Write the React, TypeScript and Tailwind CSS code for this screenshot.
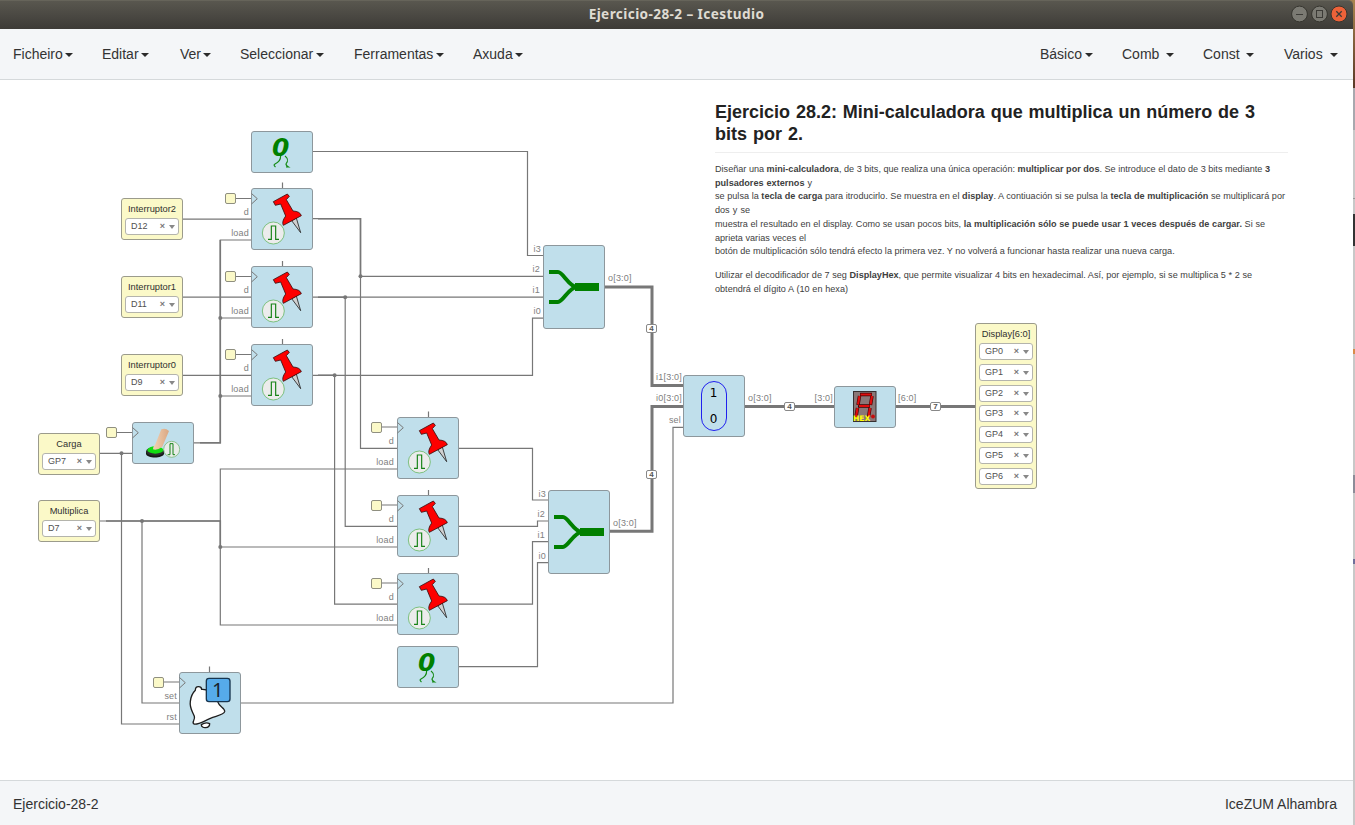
import type { ReactNode } from "react";

type MenuItem = { label: string; box: string };

const leftMenus: MenuItem[] = [
  { label: "Ficheiro", box: "w-[60px] mr-[29px]" },
  { label: "Editar", box: "w-[47px] mr-[31px]" },
  { label: "Ver", box: "w-[31px] mr-[29px]" },
  { label: "Seleccionar", box: "w-[84px] mr-[30px]" },
  { label: "Ferramentas", box: "w-[90px] mr-[29px]" },
  { label: "Axuda", box: "w-[50px]" },
];

const rightMenus: MenuItem[] = [
  { label: "Básico", box: "w-[53px] mr-[29px]" },
  { label: "Comb", box: "w-[52px] mr-[29px]" },
  { label: "Const", box: "w-[51px] mr-[30px]" },
  { label: "Varios", box: "w-[54px]" },
];

function Menu({ items }: { items: MenuItem[] }) {
  return (
    <ul className="flex items-center">
      {items.map((m) => (
        <li key={m.label} className={`flex items-center justify-between whitespace-nowrap ${m.box}`}>
          <span>{m.label}</span>
          <span className="mt-px h-0 w-0 border-x-4 border-t-4 border-x-transparent border-t-[#2b2b2b]" />
        </li>
      ))}
    </ul>
  );
}

function TitleBar() {
  return (
    <header className="relative flex h-[29px] shrink-0 items-center justify-center rounded-tr-[5px] border-t border-[#66645a] bg-gradient-to-b from-[#59574f] to-[#3d3b37]">
      <h1 className="pb-px font-['Noto_Sans'] text-[13.6px] font-bold tracking-[0.4px] text-[#dfdbd2]">
        Ejercicio-28-2 – Icestudio
      </h1>
      <svg className="absolute right-[3px] top-[4px]" width="60" height="18" viewBox="0 0 60 18">
        <g stroke="#36352f" strokeWidth="1">
          <circle cx="9.5" cy="9" r="7.9" fill="#7b7a73" />
          <circle cx="29.5" cy="9" r="7.9" fill="#7b7a73" />
          <circle cx="49" cy="9" r="8" fill="#ed6239" />
        </g>
        <g fill="none" stroke="#3c3b37">
          <path d="M6 9.5h7" />
          <rect x="26.5" y="5.5" width="6" height="7" />
          <path d="M46.3 6.3l5.4 5.4M51.7 6.3l-5.4 5.4" strokeWidth="1.3" />
        </g>
      </svg>
    </header>
  );
}

function Wires() {
  return (
    <svg className="absolute left-0 top-0" width="1353" height="700" viewBox="0 80 1353 700" fill="none">
      <g stroke="#777" strokeWidth="1.2">
        <path d="M313 151.5H527.5V255.5H543" />
        <path d="M183 219.2H251M183 297.2H251M183 375.3H251" />
        <path d="M313 218.7H360.5V448.3H397M360.5 276.3H543" />
        <path d="M313 297.2H543M345.2 297.2V526.3H397" />
        <path d="M313 375.3H532.5V318.2H543M334.6 375.3V604.2H397" />
        <path d="M194 442.8H220.3V240H251M220.3 318H251M220.3 396H251" />
        <path d="M100 453.3H132M121.5 453.3V724H179" />
        <path d="M100 521H220.3M142 521V703H179" />
        <path d="M397 469H220.3V625H397M220.3 547H397" />
        <path d="M459 448.3H532.5V500H548" />
        <path d="M459 526.3H537.5V521H548" />
        <path d="M459 604.2H532.5V541.7H548" />
        <path d="M459 666.6H537.5V562.6H548" />
        <path d="M241 703H673V427.4H683" />
        <path d="M236 198.5H251M236 276.5H251M236 354.5H251M382 427H397M382 505H397M382 583H397M116 432.5H132M163 682H179" />
        <path d="M282.5 182.5V188M282.5 261V266M282.5 339V344M428.5 411.5V417M428.5 490V495M428.5 568V573M209.5 666.5V672" />
      </g>
      <g stroke="#777" strokeWidth="1.6">
        <path d="M318 218.7H360.5V276M318 297.2H345M318 375.3H334" />
        <path d="M200 442.8H220.3V240M106 521H220.3V547" />
      </g>
      <g stroke="#777" strokeWidth="3">
        <path d="M605 286.9H652V385.6H683" />
        <path d="M610 531.3H652V406.4H683" />
        <path d="M745 406.4H834M896 406.4H975" />
      </g>
      <g fill="#777">
        <circle cx="360.5" cy="276.3" r="2" />
        <circle cx="345.2" cy="297.2" r="2" />
        <circle cx="334.6" cy="375.3" r="2" />
        <circle cx="220.3" cy="318" r="2" />
        <circle cx="220.3" cy="396" r="2" />
        <circle cx="121.5" cy="453.3" r="2" />
        <circle cx="142" cy="521" r="2" />
        <circle cx="220.3" cy="547" r="2" />
      </g>
    </svg>
  );
}

function Block({ box, children, clock }: { box: string; children?: ReactNode; clock?: boolean }) {
  return (
    <div className={`absolute rounded-[3px] border border-[#8d979c] bg-[#c0dfeb] ${box}`}>
      {clock && (
        <>
          <span className="absolute -left-[27.5px] top-[4px] h-[11px] w-[11px] rounded-[2px] border border-[#8f8f80] bg-[#fbf9c8]" />
          <svg className="absolute -left-px top-[4px]" width="8" height="12" viewBox="0 0 8 12" fill="none" stroke="#777">
            <path d="M0.5 0.5L6.3 5.7L0.5 11" />
          </svg>
        </>
      )}
      {children}
    </div>
  );
}

function Port({ at, children }: { at: string; children: string }) {
  return (
    <span className={`absolute whitespace-nowrap text-[9px] leading-[10px] tracking-[0.2px] text-[#808080] ${at}`}>
      {children}
    </span>
  );
}

function Register({ box, ports = "right-[63px]" }: { box: string; ports?: string }) {
  return (
    <Block box={`h-[62px] w-[62px] ${box}`} clock>
      <Port at={`${ports} top-[18px]`}>d</Port>
      <Port at={`${ports} top-[39px]`}>load</Port>
      <svg className="absolute -left-px -top-px" width="62" height="62" viewBox="0 0 186 186">
        <circle cx="67" cy="135" r="33" fill="#ececec" stroke="#69b869" strokeWidth="2.5" />
        <path d="M51 154H61V114H74V154H84" fill="none" stroke="#158215" strokeWidth="3.5" />
        <path d="M122 98L149 134L136 90Z" fill="#d0d0d0" stroke="#222" strokeWidth="2.5" />
        <path
          d="M67 41L109 18L115 25L106 35L126 69Q147 70 151 83L97 112Q91 102 104 84L89 48L73 52Z"
          fill="#fd0000"
          stroke="#3a0c0c"
          strokeWidth="2.5"
          strokeLinejoin="round"
        />
      </svg>
    </Block>
  );
}

function ZeroConstant({ box }: { box: string }) {
  return (
    <Block box={`h-[42px] w-[62px] ${box}`}>
      <span className="absolute left-[20px] top-[2px] font-['DejaVu_Sans'] text-[25px] font-bold italic leading-[27px] text-[#008000]">
        0
      </span>
      <svg className="absolute left-[20px] top-[23px]" width="20" height="14" viewBox="0 0 20 14" fill="none" stroke="#138a13" strokeWidth="1.2">
        <path d="M8.6 1C8.8 5 7 7 3 9Q1 10 3.5 12" />
        <path d="M13 1C16.8 4 16 6 14.2 8.5Q13.3 10 16.5 12H14" />
      </svg>
    </Block>
  );
}

function Joiner({ box, out }: { box: string; out: string }) {
  return (
    <Block box={`h-[84px] w-[62px] ${box}`}>
      <Port at="right-[63px] top-[-2px]">i3</Port>
      <Port at="right-[64px] top-[18px]">i2</Port>
      <Port at="right-[64px] top-[39px]">i1</Port>
      <Port at="right-[63px] top-[60px]">i0</Port>
      <Port at="left-[64px] top-[27px]">{out}</Port>
      <svg className="absolute -left-px -top-px" width="62" height="84" viewBox="0 0 62 84" fill="none" stroke="#008000">
        <path d="M6 27H15C20 27 26 42 34 42H38M6 57H15C20 57 26 42 34 42" strokeWidth="4" />
        <path d="M32 42H56" strokeWidth="8" />
      </svg>
    </Block>
  );
}

function PinSelect({ pin }: { pin: string }) {
  return (
    <div className="flex h-[17px] items-center rounded-[3px] border border-[#b4b4ac] bg-white pb-px pl-[5px] pr-[3px]">
      <span className="flex-1 whitespace-nowrap text-[9px] leading-[10px] text-[#505050]">{pin}</span>
      <span className="mr-[4px] text-[9px] font-bold leading-[10px] text-[#777]">×</span>
      <span className="mt-[2px] h-0 w-0 border-x-[3px] border-t-[4px] border-x-transparent border-t-[#888]" />
    </div>
  );
}

function IoBlock({ label, pins, box }: { label: string; pins: string[]; box: string }) {
  return (
    <div className={`absolute flex w-[62px] flex-col rounded-[3px] border border-[#9b9b8c] bg-[#fbf9c8] px-[3px] ${box}`}>
      <div className="mb-[3px] mt-[5px] whitespace-nowrap text-center text-[9.3px] leading-[11px] text-[#303030]">{label}</div>
      <div className="flex flex-col gap-[3.8px]">
        {pins.map((p) => (
          <PinSelect key={p} pin={p} />
        ))}
      </div>
    </div>
  );
}

function BusSize({ at, children }: { at: string; children: string }) {
  return (
    <span
      className={`absolute flex h-[9px] w-[11px] items-center justify-center rounded-[2px] border border-[#888] bg-white text-[8px] font-bold leading-[8px] text-[#555] ${at}`}
    >
      {children}
    </span>
  );
}

function PushButton() {
  return (
    <Block box="left-[132px] top-[342px] h-[42px] w-[62px]" clock>
      <svg className="absolute -left-px -top-px" width="62" height="42" viewBox="0 0 186 126">
        <defs>
          <linearGradient id="skin" x1="0" x2="1">
            <stop offset="0" stopColor="#f3d3b5" />
            <stop offset="1" stopColor="#d9a782" />
          </linearGradient>
        </defs>
        <path d="M42 88V95C44 110 93 110 96 95V88Z" fill="#161616" />
        <ellipse cx="69" cy="88" rx="27" ry="13" fill="#2d2d2d" />
        <ellipse cx="70" cy="84" rx="24" ry="11" fill="#12dd12" />
        <path d="M88 22Q100 16 111 27L91 74Q75 86 63 82Q64 73 70 67Z" fill="url(#skin)" />
        <circle cx="119" cy="82" r="24" fill="#e8ece8" stroke="#7dbb7d" strokeWidth="2.5" />
        <path d="M107 98H114V65H123V98H129" fill="none" stroke="#158215" strokeWidth="3" />
      </svg>
    </Block>
  );
}

function Bell() {
  return (
    <Block box="left-[179px] top-[592px] h-[62px] w-[62px]" clock>
      <Port at="right-[63px] top-[18px]">set</Port>
      <Port at="right-[63px] top-[39px]">rst</Port>
      <svg className="absolute -left-px -top-px" width="62" height="62" viewBox="0 0 186 186">
        <g fill="#fff" stroke="#1d1d1d" strokeWidth="4" strokeLinejoin="round">
          <path d="M67 158C67 171 92 170 92 155Q80 149 67 158Z" />
          <path d="M49 55C49 40 67 42 68 52C92 51 111 65 117 91C121 105 139 108 137 119C135 128 115 131 94 139C73 148 57 159 45 156C36 150 50 145 46 133C40 117 31 107 34 88C36 70 43 61 49 55Z" />
        </g>
        <rect x="82" y="19" width="71" height="70" rx="8" fill="#56abea" stroke="#17354f" strokeWidth="4" />
      </svg>
      <span className="absolute left-[32px] top-[5px] font-['Noto_Sans'] text-[20px] leading-[23px] text-[#17222c]">1</span>
    </Block>
  );
}

function Mux() {
  return (
    <Block box="left-[683px] top-[295px] h-[62px] w-[62px]">
      <Port at="right-[62px] top-[-4px]">i1[3:0]</Port>
      <Port at="right-[62px] top-[17px]">i0[3:0]</Port>
      <Port at="right-[63px] top-[39px]">sel</Port>
      <Port at="left-[64px] top-[17px]">o[3:0]</Port>
      <div className="absolute left-[17px] top-[5px] flex h-[50px] w-[26px] flex-col items-center justify-between rounded-full border border-[#2020ee] pb-[4px] pr-px pt-[4px] font-['DejaVu_Sans'] text-[12px] leading-[14px] text-black">
        <span>1</span>
        <span>0</span>
      </div>
    </Block>
  );
}

function HexDecoder() {
  return (
    <Block box="left-[834px] top-[306px] h-[42px] w-[62px]">
      <Port at="right-[62px] top-[6px]">[3:0]</Port>
      <Port at="left-[63px] top-[6px]">[6:0]</Port>
      <svg className="absolute left-[18px] top-[4px]" width="24" height="31" viewBox="0 0 24 31">
        <rect x="0.5" y="0.5" width="22.5" height="30" fill="#8a7777" stroke="#373030" />
        <g stroke="#3d0505" strokeWidth="3.4" fill="none">
          <path d="M7 3.5H19M6.5 5L5 14M19 5L17.5 14M5 15H17M4.5 17L3 26M17 17L15.5 26" />
        </g>
        <g stroke="#e00d0d" strokeWidth="2.2" fill="none">
          <path d="M7.5 3.5H18.5M6.5 5L5 13.5M19 5L17.5 13.5M6 15H16.5M4.5 17L3 26M17 17L15.5 26" />
        </g>
        <circle cx="20" cy="25.5" r="1.9" fill="#c40d0d" />
      </svg>
      <span className="absolute left-[18px] top-[28px] font-['DejaVu_Sans'] text-[7.5px] font-bold leading-[8px] text-[#ffff00]">HEX</span>
    </Block>
  );
}

function Line({ width, children }: { width: string; children: ReactNode }) {
  return (
    <span className={`block whitespace-nowrap [text-align-last:justify] ${width}`}>{children}</span>
  );
}

function Notes() {
  return (
    <article className="absolute left-[715px] top-[21px] w-[573px] text-[#404040]">
      <h2 className="border-b border-[#eeeeee] pb-[7px] text-[18px] font-bold leading-[22px] text-[#222]">
        <Line width="w-[540px]">Ejercicio 28.2: Mini-calculadora que multiplica un número de 3</Line>
        <Line width="w-[88px]">bits por 2.</Line>
      </h2>
      <p className="mt-[10px] text-[9.1px] leading-[13.7px]">
        <Line width="w-[555px]">
          Diseñar una <b>mini-calculadora</b>, de 3 bits, que realiza una única operación: <b>multiplicar por dos</b>. Se introduce el dato de 3 bits mediante <b>3</b>
        </Line>
        <Line width="w-[97px]">
          <b>pulsadores externos</b> y
        </Line>
        <Line width="w-[570px]">
          se pulsa la <b>tecla de carga</b> para itroducirlo. Se muestra en el <b>display</b>. A contiuación si se pulsa la <b>tecla de multiplicación</b> se multiplicará por
        </Line>
        <Line width="w-[35px]">dos y se</Line>
        <Line width="w-[550px]">
          muestra el resultado en el display. Como se usan pocos bits, <b>la multiplicación sólo se puede usar 1 veces después de cargar.</b> Si se
        </Line>
        <Line width="w-[91px]">aprieta varias veces el</Line>
        <Line width="w-[459px]">
          botón de multiplicación sólo tendrá efecto la primera vez. Y no volverá a funcionar hasta realizar una nueva carga.
        </Line>
      </p>
      <p className="mt-[10px] text-[9.1px] leading-[13.7px]">
        <Line width="w-[537px]">
          Utilizar el decodificador de 7 seg <b>DisplayHex</b>, que permite visualizar 4 bits en hexadecimal. Así, por ejemplo, si se multiplica 5 * 2 se
        </Line>
        <Line width="w-[133px]">obtendrá el dígito A (10 en hexa)</Line>
      </p>
    </article>
  );
}

function Canvas() {
  return (
    <main className="relative min-h-0 flex-1 overflow-hidden bg-white">
      <Wires />
      <ZeroConstant box="left-[251px] top-[51px]" />
      <ZeroConstant box="left-[397px] top-[566px]" />
      <Register box="left-[251px] top-[108px]" />
      <Register box="left-[251px] top-[186px]" />
      <Register box="left-[251px] top-[264px]" />
      <Register box="left-[397px] top-[337px]" ports="right-[64px]" />
      <Register box="left-[397px] top-[415px]" ports="right-[64px]" />
      <Register box="left-[397px] top-[493px]" ports="right-[64px]" />
      <PushButton />
      <Bell />
      <Joiner box="left-[543px] top-[165px]" out="o[3:0]" />
      <Joiner box="left-[548px] top-[410px]" out="o[3:0]" />
      <Mux />
      <HexDecoder />
      <IoBlock label="Interruptor2" pins={["D12"]} box="left-[121px] top-[118px] h-[42px]" />
      <IoBlock label="Interruptor1" pins={["D11"]} box="left-[121px] top-[196px] h-[42px]" />
      <IoBlock label="Interruptor0" pins={["D9"]} box="left-[121px] top-[274px] h-[42px]" />
      <IoBlock label="Carga" pins={["GP7"]} box="left-[38px] top-[353px] h-[42px]" />
      <IoBlock label="Multiplica" pins={["D7"]} box="left-[38px] top-[420px] h-[42px]" />
      <IoBlock
        label="Display[6:0]"
        pins={["GP0", "GP1", "GP2", "GP3", "GP4", "GP5", "GP6"]}
        box="left-[975px] top-[243px] h-[166px]"
      />
      <BusSize at="left-[646px] top-[244px]">4</BusSize>
      <BusSize at="left-[646px] top-[390px]">4</BusSize>
      <BusSize at="left-[784px] top-[322px]">4</BusSize>
      <BusSize at="left-[930px] top-[322px]">7</BusSize>
      <Notes />
    </main>
  );
}

function DesktopEdge() {
  return (
    <div className="flex w-[2px] flex-col bg-[#c8c8c8]">
      <div className="h-[88px] bg-gradient-to-b from-[#a98550] to-[#5a3a28]" />
      <div className="h-[42px] bg-[#a8a8ae]" />
      <div className="mt-[68px] h-px bg-[#999]" />
      <div className="mt-[15px] h-[32px] bg-[#333]" />
      <div className="mt-[103px] h-[5px] bg-[#d98b4a]" />
      <div className="mt-[121px] h-[18px] bg-[#8c8c98]" />
      <div className="mt-[66px] h-[5px] bg-[#6f6f9a]" />
    </div>
  );
}

export default function App() {
  return (
    <div className="flex h-[825px] w-[1355px] overflow-hidden bg-[#c8c8c8] font-['Liberation_Sans',sans-serif]">
      <div className="flex w-[1353px] flex-col bg-[#a08050]">
        <TitleBar />
        <nav className="flex h-[51px] shrink-0 items-center justify-between border-b border-[#d5d9db] bg-[#f4f6f8] pl-[13px] pr-[15px] text-[14px] text-[#333]">
          <Menu items={leftMenus} />
          <Menu items={rightMenus} />
        </nav>
        <Canvas />
        <footer className="flex h-[45px] shrink-0 items-center justify-between border-t border-[#d5d9db] bg-[#f4f6f8] pb-px pl-[13px] pr-[16px] pt-[3px] text-[14px] text-[#333]">
          <span>Ejercicio-28-2</span>
          <span>IceZUM Alhambra</span>
        </footer>
      </div>
      <DesktopEdge />
    </div>
  );
}
